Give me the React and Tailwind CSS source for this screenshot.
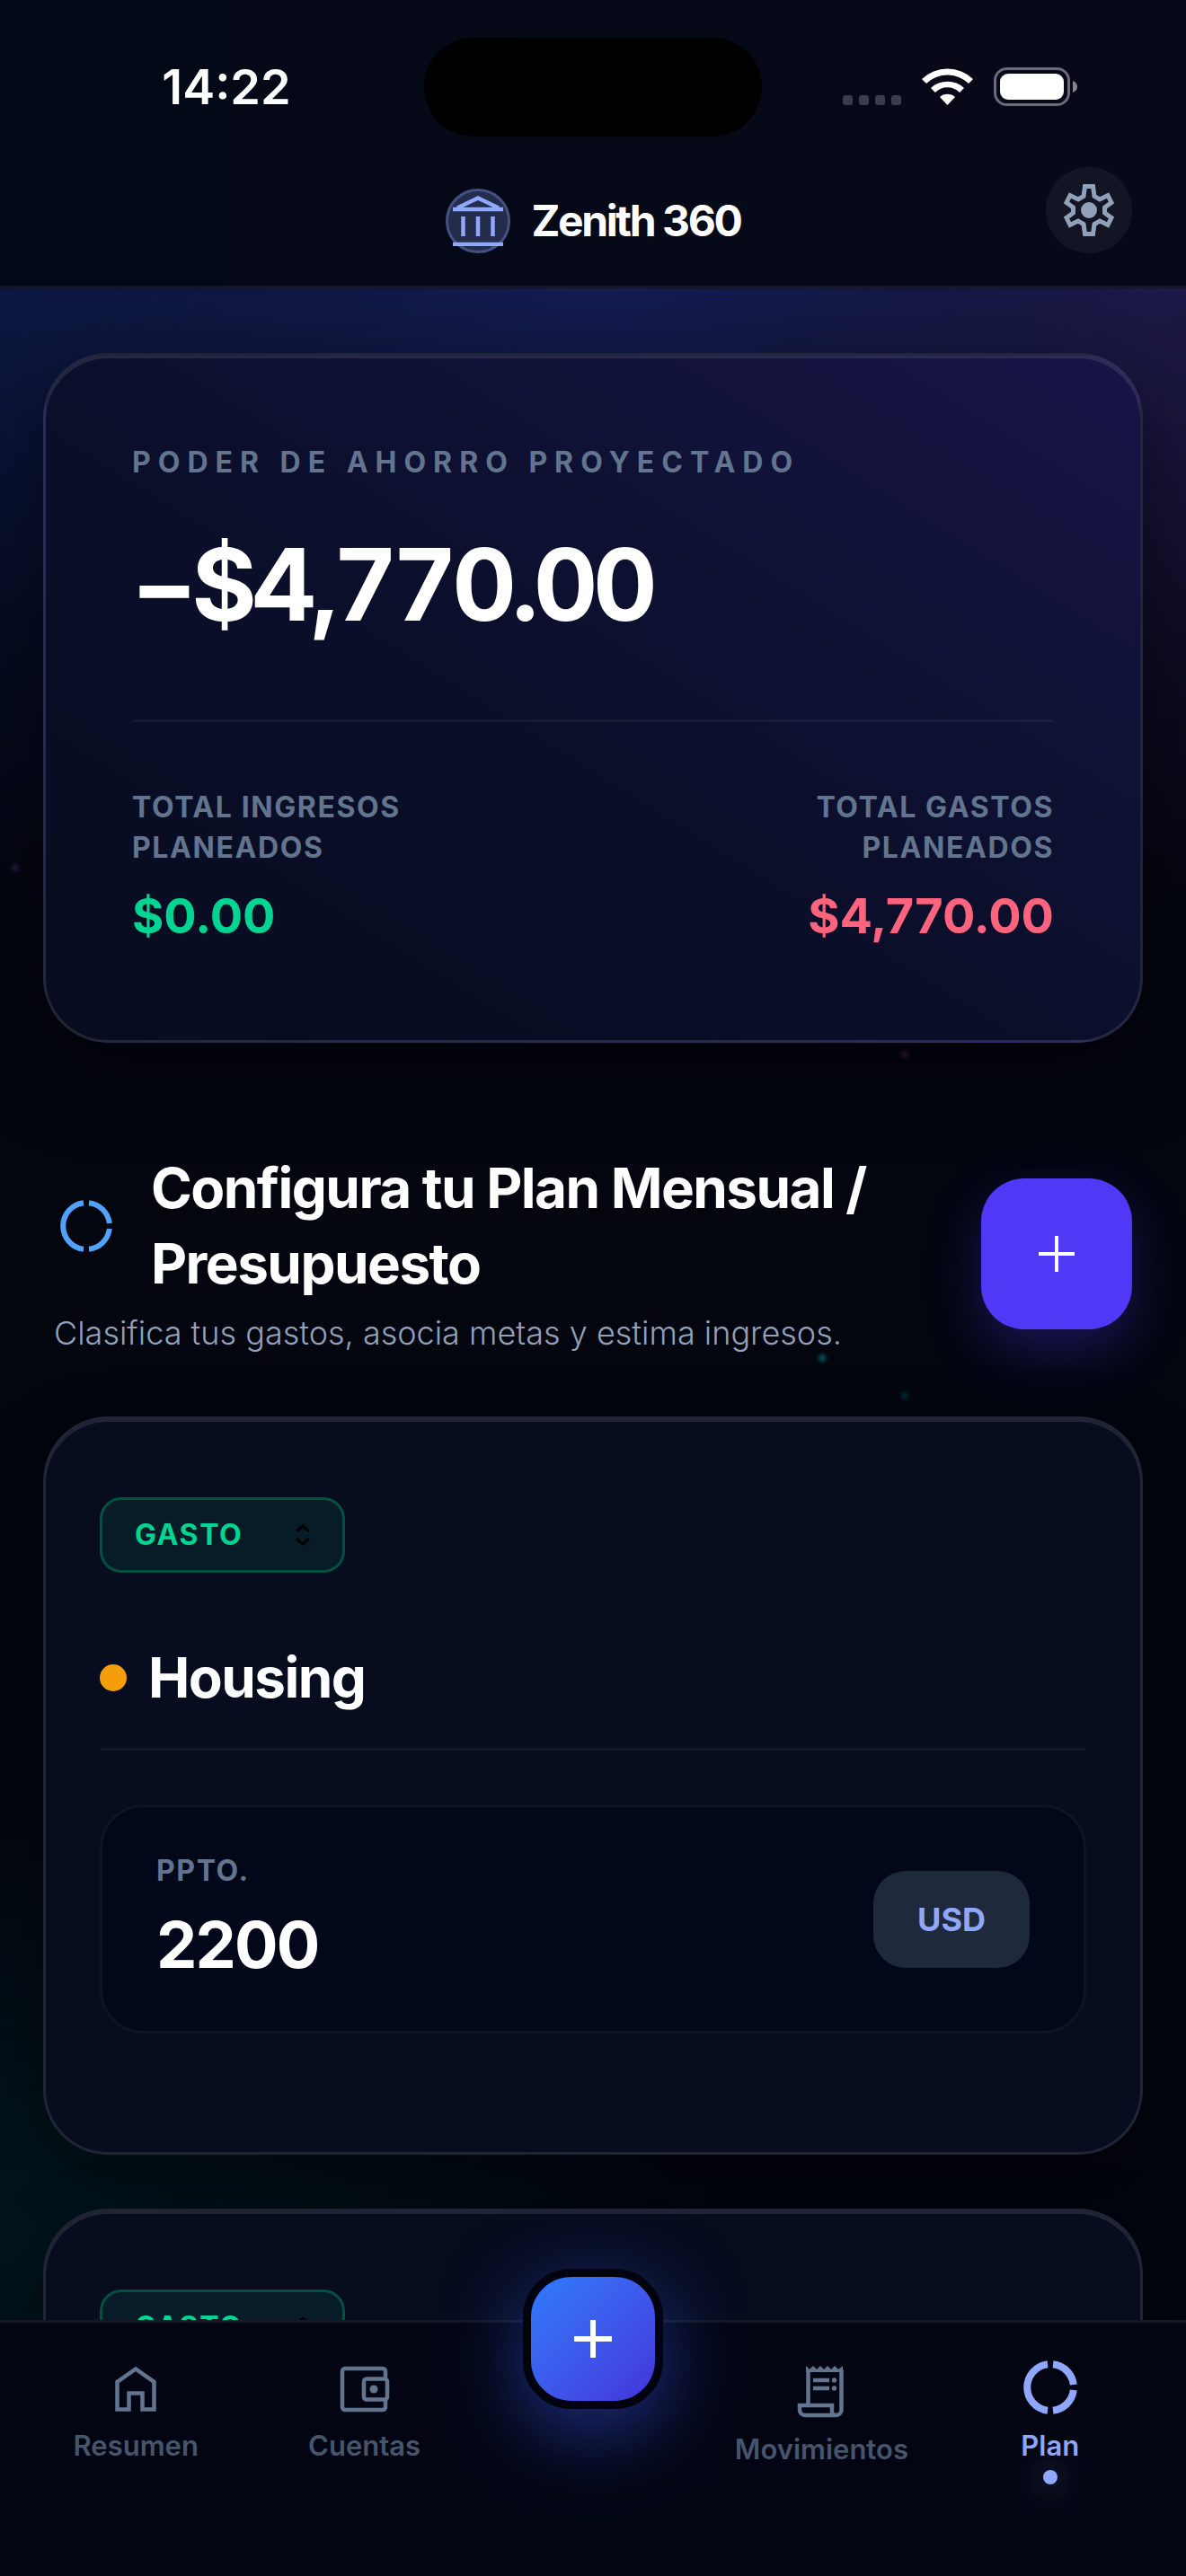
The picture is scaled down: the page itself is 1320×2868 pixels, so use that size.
import { useState } from "react";

const menuLeft = [
  { id: "resumen", label: "Resumen", icon: HomeIcon },
  { id: "cuentas", label: "Cuentas", icon: WalletIcon },
];

const categories = [
  { id: "housing", name: "Housing", amount: "2200" },
  { id: "nueva", name: "", amount: "" },
];

const stars = [
  "left-[1%] top-[962px] bg-purple-400/20",
  "left-[76%] top-[1170px] bg-rose-400/20",
  "left-[69%] top-[1508px] bg-teal-400/40",
  "left-[76%] top-[1550px] bg-teal-400/20",
];

function HomeIcon() {
  return (
    <svg viewBox="0 0 48 52" className="h-[52px] w-12" fill="none" stroke="currentColor" strokeWidth="4.5">
      <path d="M3.500 48.500V18L24 3.500 44.500 18v30.500H31.500V30.500h-15v18z" />
    </svg>
  );
}

function WalletIcon() {
  return (
    <svg viewBox="0 0 56 52" className="h-[52px] w-14" fill="none" stroke="currentColor" strokeWidth="4.5">
      <path d="M51 14V6a3 3 0 0 0-3-3H6a3 3 0 0 0-3 3v40a3 3 0 0 0 3 3h42a3 3 0 0 0 3-3v-9" />
      <rect x="27" y="14.500" width="26" height="23" rx="3" />
      <circle cx="38" cy="26" r="4.500" fill="currentColor" stroke="none" />
    </svg>
  );
}

function ReceiptIcon() {
  return (
    <svg viewBox="0 0 54 58" className="h-[58px] w-[54px]" fill="none" stroke="currentColor" strokeWidth="4.500">
      <path d="M12.500 43V4M49.500 4v45a6 6 0 0 1-6 6H9a6 6 0 0 1-6-6v-5h36v6a4 4 0 0 0 4 5" />
      <path d="m10 0 4 4 4-4 4 4 4-4 4 4 4-4 4 4 4-4 4 4 5-4v7H10z" fill="currentColor" stroke="none" />
      <path d="M18 16h18M18 25h18" />
      <circle cx="41.500" cy="16" r="2.700" fill="currentColor" stroke="none" />
      <circle cx="41.500" cy="25" r="2.700" fill="currentColor" stroke="none" />
    </svg>
  );
}

function DonutIcon({ className, width = 8 }) {
  return (
    <svg viewBox="0 0 60 60" className={className} fill="none" stroke="currentColor" strokeWidth={width}>
      <path d="M27 4.2a26 26 0 0 0 0 51.6M33 4.2A26 26 0 0 1 55.8 27M55.8 33A26 26 0 0 1 33 55.8" />
    </svg>
  );
}

function PlusIcon({ className, width }) {
  return (
    <svg viewBox="0 0 42 42" className={className} fill="none" stroke="currentColor" strokeWidth={width}>
      <path d="M21 0v42M0 21h42" />
    </svg>
  );
}

function StatusBar() {
  return (
    <div className="grid h-[186px] grid-cols-3 pt-[42px]">
      <div className="flex h-[110px] items-center justify-center pl-16">
        <span className="text-[54px] leading-none font-semibold">14:22</span>
      </div>
      <div className="mx-auto h-[110px] w-[376px] rounded-full bg-black"></div>
      <div className="flex h-[110px] items-center justify-end pr-[120px]">
        <svg viewBox="0 0 262 44" className="h-11 w-[262px]">
          <g fill="#3c3d4b">
            <rect x="0" y="31" width="11" height="11" rx="3" />
            <rect x="18" y="31" width="11" height="11" rx="3" />
            <rect x="36" y="31" width="11" height="11" rx="3" />
            <rect x="54" y="31" width="11" height="11" rx="3" />
          </g>
          <g fill="#fff">
            <path d="M88 13a41 41 0 0 1 57 0l-5 5a34 34 0 0 0-47 0z" />
            <path d="M98 23a27 27 0 0 1 37 0l-5 5a19 19 0 0 0-27 0z" />
            <path d="M108 33a13 13 0 0 1 17 0l-8.500 9z" />
            <rect x="175" y="7" width="71" height="29" rx="9" />
          </g>
          <rect x="169.500" y="1.500" width="82" height="40" rx="13" fill="none" stroke="#6a6b78" strokeWidth="3" />
          <path d="M256 15q5 2 5 6.500t-5 6.500z" fill="#85868f" />
        </svg>
      </div>
    </div>
  );
}

function Header() {
  return (
    <header className="relative z-10 shrink-0 border-b-[3px] border-white/6 bg-linear-to-r from-[#030817] to-[#080918]">
      <StatusBar />
      <div className="grid h-[132px] grid-cols-[96px_1fr_96px] items-start px-15">
        <span></span>
        <div className="flex items-center justify-center gap-6 pt-6">
          <span className="flex size-[72px] items-center justify-center rounded-full border-[3px] border-[#445080] bg-[#242c4b] text-[#90a7ff]">
            <svg viewBox="0 0 56 56" className="size-14 shrink-0" fill="none" stroke="currentColor" strokeWidth="4.500">
              <path d="M5 13.500 28 2.500l23 11" />
              <path d="M0 15h56M0 54h56M11.500 23v22M28 23v22M44.500 23v22" />
            </svg>
          </span>
          <h1 className="text-[48px] leading-none font-bold tracking-tighter">Zenith 360</h1>
        </div>
        <button
          type="button"
          aria-label="Ajustes"
          className="flex size-24 items-center justify-center rounded-full bg-[#141524] text-[#90a1b9]"
        >
          <svg viewBox="0 0 56 58" className="h-[58px] w-14" fill="none" stroke="currentColor" strokeWidth="5">
            <path d="M23.500 2.500h9l1.500 11 6 3.500 9-4.500 4 8-7.500 5.500v6l7.500 5.500-4 8-9-4.500-6 3.500-1.500 11h-9l-1.500-11-6-3.500-9 4.500-4-8 7.500-5.500v-6l-7.500-5.500 4-8 9 4.500 6-3.500z" />
            <circle cx="28" cy="29" r="9" fill="currentColor" stroke="none" />
          </svg>
        </button>
      </div>
    </header>
  );
}

function SummaryCard() {
  return (
    <section className="rounded-[72px] border-[3px] border-white/10 bg-linear-to-bl from-[#171447] via-[#0b0f2b] to-[#070c1f] px-24 pt-24 pb-24 shadow-[0_24px_96px_rgba(0,0,0,0.5),inset_0_3px_0_rgba(255,255,255,0.1)]">
      <p className="text-[32px] leading-[45px] font-bold tracking-[0.25em] text-[#62748e]">
        PODER DE AHORRO PROYECTADO
      </p>
      <p className="mt-[54px] text-[111px] leading-[120px] font-bold tracking-tighter tabular-nums">
        −$4,770.00
      </p>
      <div className="mt-[90px] flex justify-between border-t-[3px] border-white/5 pt-[72px]">
        <div>
          <p className="text-[32px] leading-[45px] font-bold tracking-wider text-[#62748e]">
            TOTAL INGRESOS
            <br />
            PLANEADOS
          </p>
          <p className="mt-3 text-[54px] leading-[84px] font-bold text-[#00d492]">$0.00</p>
        </div>
        <div className="text-right">
          <p className="text-[32px] leading-[45px] font-bold tracking-wider text-[#62748e]">
            TOTAL GASTOS
            <br />
            PLANEADOS
          </p>
          <p className="mt-3 text-[54px] leading-[84px] font-bold text-[#ff637e]">$4,770.00</p>
        </div>
      </div>
    </section>
  );
}

function BudgetCard({ id, name, amount }) {
  const [type, setType] = useState("gasto");
  const [value, setValue] = useState(amount);

  return (
    <article className="rounded-[72px] border-[3px] border-white/10 bg-[#070c1e] px-15 pt-[87px] pb-[132px] shadow-[0_24px_72px_rgba(0,0,0,0.4),inset_0_3px_0_rgba(255,255,255,0.1)]">
      <div className="relative w-[273px]">
        <select
          aria-label="Tipo"
          value={type}
          onChange={(e) => setType(e.target.value)}
          className="block h-[84px] w-full appearance-none rounded-3xl border-[3px] border-[#04513f] bg-[#071c27] px-9 text-[32px] font-bold tracking-wider text-[#00d492]"
        >
          <option value="gasto">GASTO</option>
          <option value="ingreso">INGRESO</option>
        </select>
        <svg
          viewBox="0 0 18 24"
          className="pointer-events-none absolute top-[30px] right-[38px] h-6 w-[18px]"
          fill="none"
          stroke="#000"
          strokeWidth="3"
        >
          <path d="m2 8 7-6 7 6M2 16l7 6 7-6" />
        </svg>
      </div>

      {/* sin nombre todavía: solo se elige el tipo */}
      {name && (
        <>
          <div className="mt-[75px] flex items-center gap-6 border-b-[3px] border-white/5 pb-9">
            <span className="size-[30px] rounded-full bg-[#f59e0b]"></span>
            <h3 className="text-[62px] leading-[84px] font-bold tracking-tight">{name}</h3>
          </div>

          <div className="mt-15 flex items-center justify-between rounded-[48px] border-[3px] border-white/5 bg-[#02071a] px-15 py-12">
            <div className="min-w-0">
              <label
                htmlFor={id}
                className="block text-[32px] leading-[45px] font-bold tracking-wider text-[#62748e]"
              >
                PPTO.
              </label>
              <input
                id={id}
                value={value}
                onChange={(e) => setValue(e.target.value)}
                className="mt-3 block h-24 w-full bg-transparent text-[72px] font-bold tracking-tight outline-none"
              />
            </div>
            <button
              type="button"
              className="h-27 w-[174px] shrink-0 rounded-[36px] bg-[#1e293b] text-[36px] font-bold text-[#90a7ff]"
            >
              USD
            </button>
          </div>
        </>
      )}
    </article>
  );
}

function BottomNav() {
  return (
    <nav className="relative z-20 grid h-[285px] shrink-0 grid-cols-5 border-t-[3px] border-[#151824] bg-[#030612] px-6">
      {menuLeft.map(({ id, label, icon: Icon }) => (
        <a key={id} href={`#${id}`} className="flex flex-col items-center gap-[14px] pt-12 text-[#62748e]">
          <Icon />
          <span className="text-[31px] leading-[45px] font-semibold text-[#45556c]">{label}</span>
        </a>
      ))}
      <div className="flex items-start justify-center">
        <button
          type="button"
          aria-label="Agregar movimiento"
          className="-mt-15 flex size-[156px] items-center justify-center rounded-[54px] border-9 border-[#02030f] bg-linear-to-br from-[#2b7fff] to-[#432dd7] bg-origin-border shadow-[0_24px_90px_rgba(60,90,255,0.5)]"
        >
          <PlusIcon className="size-[42px]" width="6" />
        </button>
      </div>
      <a href="#movimientos" className="flex flex-col items-center gap-3 pt-12 text-[#62748e]">
        <ReceiptIcon />
        <span className="text-[31px] leading-[45px] font-semibold text-[#45556c]">Movimientos</span>
      </a>
      <a href="#plan" aria-current="page" className="flex flex-col items-center pt-[42px] text-[#90a7ff]">
        <DonutIcon className="size-15" />
        <span className="mt-3 text-[31px] leading-[45px] font-semibold">Plan</span>
        <span className="mt-[5px] size-4 rounded-full bg-[#90a7ff] shadow-[0_0_36px_rgba(144,167,255,0.7)]"></span>
      </a>
    </nav>
  );
}

export default function App() {
  return (
    <div className="relative flex h-screen flex-col overflow-hidden bg-[#03050f] font-['Inter','Liberation_Sans',sans-serif] text-white">
      {/* luces de fondo */}
      <div className="absolute inset-0 bg-[radial-gradient(ellipse_60%_28%_at_50%_8%,#161f58_0%,transparent_100%),radial-gradient(ellipse_55%_26%_at_100%_9%,#211a48_0%,transparent_100%),radial-gradient(ellipse_55%_26%_at_0%_9%,#0b1740_0%,transparent_100%),radial-gradient(ellipse_60%_16%_at_0%_86%,#02161d_0%,transparent_100%)]"></div>
      {stars.map((star) => (
        <span key={star} className={`absolute size-2 rounded-full blur-[2px] ${star}`}></span>
      ))}

      <Header />

      <main className="relative min-h-0 flex-1 overflow-hidden px-12 pt-[72px]">
        <SummaryCard />

        <div className="mt-[120px] mb-[66px] flex items-center justify-between px-3">
          <div>
            <div className="flex items-center gap-[42px] pl-1.5">
              <DonutIcon className="size-15 shrink-0 text-[#51a2ff]" width="6" />
              <h2 className="text-[62px] leading-[84px] font-bold tracking-tight">
                Configura tu Plan Mensual /
                <br />
                Presupuesto
              </h2>
            </div>
            <p className="mt-2 text-[36px] leading-[54px] font-light text-[#90a1b9]">
              Clasifica tus gastos, asocia metas y estima ingresos.
            </p>
          </div>
          <button
            type="button"
            aria-label="Agregar categoría"
            className="flex size-42 shrink-0 items-center justify-center rounded-[48px] bg-[#4f39f6] shadow-[0_24px_60px_rgba(79,57,246,0.3)]"
          >
            <PlusIcon className="size-10" width="4" />
          </button>
        </div>

        <div className="flex flex-col gap-15">
          {categories.map((cat) => (
            <BudgetCard key={cat.id} {...cat} />
          ))}
        </div>
      </main>

      <BottomNav />
    </div>
  );
}
